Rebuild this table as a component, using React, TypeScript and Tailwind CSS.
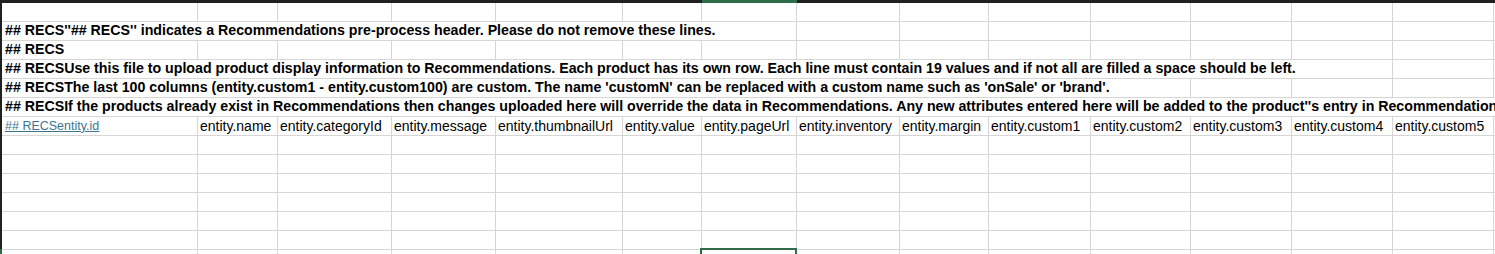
const cols = [196, 80, 114, 104, 127, 79, 95, 103, 89, 102, 100, 101, 101, 101, 200];

const headers = [
  "entity.name",
  "entity.categoryId",
  "entity.message",
  "entity.thumbnailUrl",
  "entity.value",
  "entity.pageUrl",
  "entity.inventory",
  "entity.margin",
  "entity.custom1",
  "entity.custom2",
  "entity.custom3",
  "entity.custom4",
  "entity.custom5",
  "",
];

// comment rows: text + how many columns the overflowing text covers
const notes: [string, number][] = [
  ["## RECS''## RECS'' indicates a Recommendations pre-process header. Please do not remove these lines.", 7],
  ["## RECS", 1],
  ["## RECSUse this file to upload product display information to Recommendations. Each product has its own row. Each line must contain 19 values and if not all are filled a space should be left.", 13],
  ["## RECSThe last 100 columns (entity.custom1 - entity.custom100) are custom. The name 'customN' can be replaced with a custom name such as 'onSale' or 'brand'.", 11],
  ["## RECSIf the products already exist in Recommendations then changes uploaded here will override the data in Recommendations. Any new attributes entered here will be added to the product''s entry in Recommendations.", 15],
];

const sum = (n: number, from = 0) => cols.slice(from, from + n).reduce((a, b) => a + b, 0);

const EmptyRow = () => (
  <div className="flex h-[19px] shrink-0 border-b border-[#d6d6d6]">
    {cols.map((w, i) => (
      <div key={i} className="h-full shrink-0 border-r border-[#d6d6d6]" style={{ width: w }} />
    ))}
  </div>
);

const NoteRow = ({ text, span }: { text: string; span: number }) => (
  <div className="flex h-[19px] shrink-0 border-b border-[#d6d6d6]">
    <div
      className="flex h-full shrink-0 items-center overflow-hidden whitespace-nowrap border-r border-[#d6d6d6] pl-[3px] text-[14.2px] font-bold text-black"
      style={{ width: sum(span) }}
    >
      {text}
    </div>
    {cols.slice(span).map((w, i) => (
      <div key={i} className="h-full shrink-0 border-r border-[#d6d6d6]" style={{ width: w }} />
    ))}
  </div>
);

const HeaderRow = () => (
  <div className="flex h-[19px] shrink-0 border-b border-[#d6d6d6] text-[14px] text-black">
    <div className="flex h-full shrink-0 items-center border-r border-[#d6d6d6] pl-[3px]" style={{ width: cols[0] }}>
      <span className="text-[12.5px] text-[#3e7391] underline decoration-[#3e7391]">## RECSentity.id</span>
    </div>
    {headers.map((h, i) => (
      <div
        key={i}
        className="flex h-full shrink-0 items-center overflow-hidden whitespace-nowrap border-r border-[#d6d6d6] pl-[2px]"
        style={{ width: cols[i + 1] }}
      >
        {h}
      </div>
    ))}
  </div>
);

export default function App() {
  return (
    <div className="relative h-[254px] w-[1495px] overflow-hidden bg-white font-['Liberation_Sans',Arial,sans-serif]">
      <div className="flex h-[3px] bg-[#202020]">
        <div className="w-[2px] shrink-0" />
        {cols.map((w, i) => (
          <div key={i} className={i === 6 ? "h-full shrink-0 bg-[#2f6d4a]" : "h-full shrink-0"} style={{ width: w }} />
        ))}
      </div>
      <div className="flex">
        <div className="flex w-[2px] shrink-0 flex-col bg-[#202020]">
          <div className="h-[246px]" />
          <div className="flex-1 bg-[#2f6d4a]" />
        </div>
        <div className="flex flex-col">
          <EmptyRow />
          {notes.map(([t, s], i) => (
            <NoteRow key={i} text={t} span={s} />
          ))}
          <HeaderRow />
          {Array.from({ length: 7 }).map((_, i) => (
            <EmptyRow key={i} />
          ))}
        </div>
      </div>
      {/* selected cell */}
      <div className="absolute left-[700px] top-[248px] h-[20px] w-[97px] border-2 border-[#2f6d4a]" />
    </div>
  );
}
